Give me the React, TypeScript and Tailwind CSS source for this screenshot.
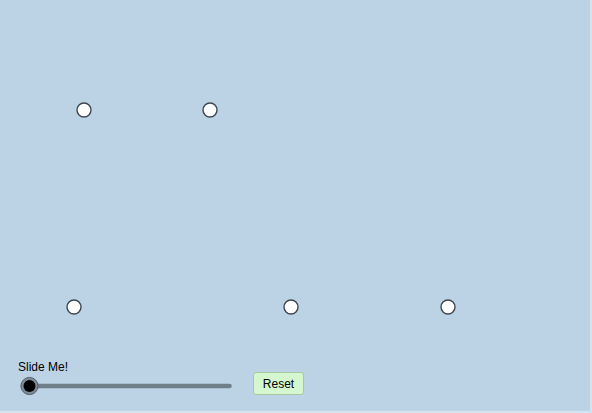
import React from "react";

const points = [
  { x: 84, y: 110 },
  { x: 210, y: 110 },
  { x: 74, y: 307 },
  { x: 291, y: 307 },
  { x: 448, y: 307 },
];

function FreePoint({ x, y }: { x: number; y: number }) {
  return (
    <circle cx={x} cy={y} r={7} fill="#ffffff" stroke="#3d4650" strokeWidth={1.4} />
  );
}

function Slider() {
  return (
    <svg width={226} height={22} className="block">
      <line x1={11} y1={11} x2={211.5} y2={11} stroke="#6e7f8a" strokeWidth={4.5} strokeLinecap="round" />
      <circle cx={11.5} cy={11} r={8.6} fill="#7d8b96" stroke="#56606a" strokeWidth={1} />
      <circle cx={11.5} cy={11} r={6} fill="#000000" />
    </svg>
  );
}

export default function App() {
  return (
    <div className="w-[592px] h-[413px] bg-[#d3e3f0]">
      <div className="relative w-[590px] h-[411px] bg-[#bcd3e6] overflow-hidden font-['Liberation_Sans',Arial,sans-serif]">
        <svg width={590} height={411} className="absolute inset-0">
          {points.map((p, i) => (
            <FreePoint key={i} x={p.x} y={p.y} />
          ))}
        </svg>
        <div className="absolute left-[18px] top-[360px] flex flex-col">
          <span className="text-[12px] leading-[14px] text-black">Slide Me!</span>
          <div className="mt-[1px]">
            <Slider />
          </div>
        </div>
        <button className="absolute left-[253px] top-[372px] w-[51px] h-[23px] rounded-[3px] border border-[#a6c9a2] bg-[#d4f7d0] text-[12px] leading-none text-black font-['Liberation_Sans',Arial,sans-serif] flex items-center justify-center">
          Reset
        </button>
      </div>
    </div>
  );
}
